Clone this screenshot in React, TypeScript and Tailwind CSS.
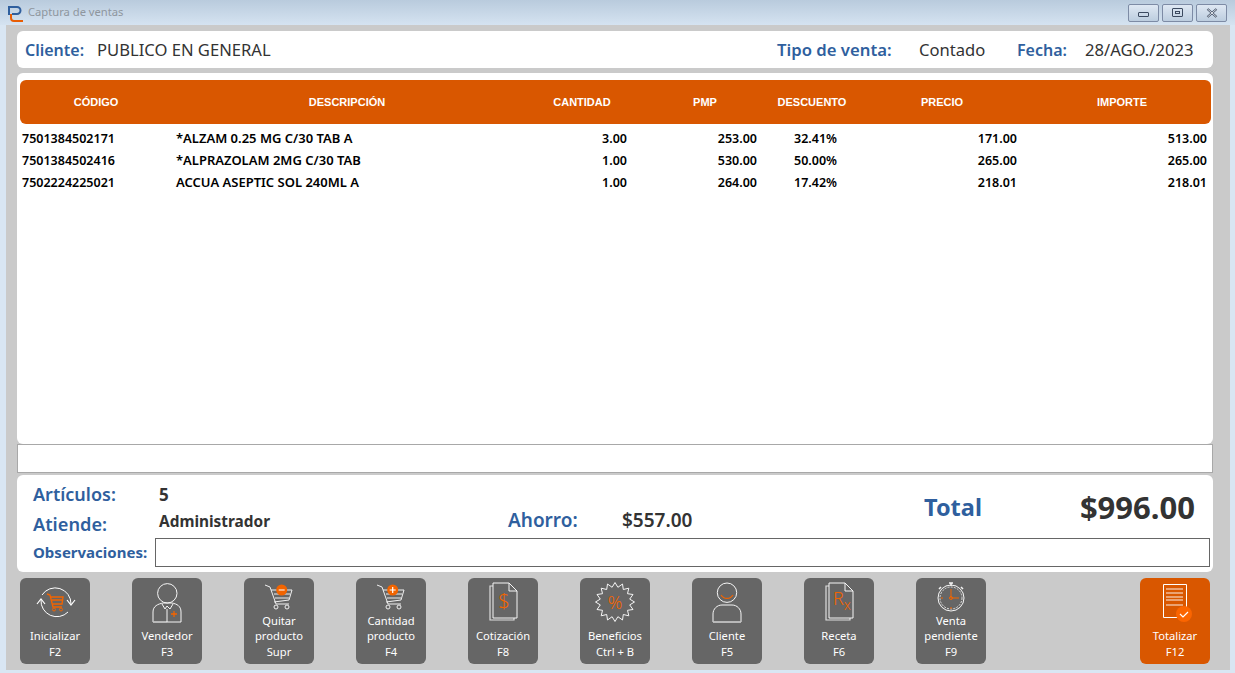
import React from 'react';

const FONT = "font-['Noto_Sans','Open_Sans',sans-serif]";
const ORANGE = '#f26400';

const rows = [
  { code: '7501384502171', name: '*ALZAM 0.25 MG C/30 TAB A', qty: '3.00', pmp: '253.00', disc: '32.41%', price: '171.00', total: '513.00' },
  { code: '7501384502416', name: '*ALPRAZOLAM 2MG C/30 TAB', qty: '1.00', pmp: '530.00', disc: '50.00%', price: '265.00', total: '265.00' },
  { code: '7502224225021', name: 'ACCUA ASEPTIC SOL 240ML A', qty: '1.00', pmp: '264.00', disc: '17.42%', price: '218.01', total: '218.01' },
];

const COLS = 'grid grid-cols-[152px_350px_120px_126px_88px_172px_1fr]';

const Cart = ({ x, sign }: { x: number; sign: 'plus' | 'minus' }) => (
  <>
    <path d="M21 7l5 2 6 17h13M27 12h21l-3 10-15 2" fill="none" stroke="#f0f0f0" strokeWidth="1" />
    <path d="M30 16h16M31 20h14" stroke="#f0f0f0" strokeWidth="1" />
    <circle cx="32" cy="29" r="2" fill="none" stroke="#f0f0f0" />
    <circle cx="43" cy="29" r="2" fill="none" stroke="#f0f0f0" />
    <circle cx={x} cy="12" r="5.5" fill={ORANGE} />
    <path d={`M${x - 3} 12h6`} stroke="#fff" strokeWidth="1.2" />
    {sign === 'plus' && <path d={`M${x} 9v6`} stroke="#fff" strokeWidth="1.2" />}
  </>
);

const Sheets = ({ children }: { children: React.ReactNode }) => (
  <>
    <path d="M25 8h-3v34h24v-2" fill="none" stroke="#ddd" strokeWidth="1.2" />
    <path d="M25 5h16l8 8v27H25z" fill="#666" stroke="#f5f5f5" strokeWidth="1" />
    <path d="M41 5v8h8" fill="none" stroke="#f5f5f5" strokeWidth="1" />
    {children}
  </>
);

const starPoints = () => {
  const pts: string[] = [];
  for (let i = 0; i < 32; i++) {
    const r = i % 2 === 0 ? 19.5 : 15;
    const a = (i / 32) * Math.PI * 2;
    pts.push(`${(35 + r * Math.sin(a)).toFixed(1)},${(24 - r * Math.cos(a)).toFixed(1)}`);
  }
  return pts.join(' ');
};

const icons: Record<string, React.ReactNode> = {
  init: (
    <>
      <path d="M22 17A15.8 15.8 0 0 1 51 26M48 34A15.8 15.8 0 0 1 21 22" fill="none" stroke="#fff" strokeWidth="1" />
      <path d="M17 26l4-5 4 5M47 22l4 5 4-5" fill="none" stroke="#fff" strokeWidth="1.2" />
      <path d="M27 16l3 1 3 12h9M31 19h12l-1 7H33M32 22h11" fill="none" stroke={ORANGE} strokeWidth="1.4" />
      <circle cx="34" cy="31.5" r="1.5" fill="none" stroke={ORANGE} />
      <circle cx="41" cy="31.5" r="1.5" fill="none" stroke={ORANGE} />
    </>
  ),
  seller: (
    <>
      <circle cx="35.3" cy="15.3" r="9.7" fill="none" stroke="#f5f5f5" strokeWidth="1" />
      <path d="M21 44V34c0-6 5-8 10-9h9c5 1 9 3 9 9v10z" fill="none" stroke="#f5f5f5" strokeWidth="1" />
      <path d="M21 44h14" stroke="#bbb" strokeWidth="1.5" />
      <path d="M30 26l3 5 2-3 3 3 3-5M35 31v13" fill="none" stroke="#f5f5f5" strokeWidth="1" />
      <path d="M39 36h6M42 33v6" stroke={ORANGE} strokeWidth="1.3" />
    </>
  ),
  remove: <Cart x={37.7} sign="minus" />,
  add: <Cart x={36.7} sign="plus" />,
  quote: (
    <Sheets>
      <text x="36" y="30" textAnchor="middle" fontSize="20" fill={ORANGE} fontFamily="Noto Sans" fontWeight="300">$</text>
    </Sheets>
  ),
  benefits: (
    <>
      <polygon points={starPoints()} fill="none" stroke="#f5f5f5" strokeWidth="1" />
      <text x="35" y="31" textAnchor="middle" fontSize="18" fill={ORANGE} fontFamily="Noto Sans" fontWeight="300">%</text>
    </>
  ),
  client: (
    <>
      <circle cx="35" cy="14.7" r="9.7" fill="none" stroke="#f5f5f5" strokeWidth="1" />
      <path d="M29 17a7 7 0 0 0 12 0" fill="none" stroke={ORANGE} strokeWidth="1.2" />
      <path d="M21 44V36c0-5 4-9 9-9h10c5 0 9 4 9 9v8z" fill="none" stroke="#f5f5f5" strokeWidth="1" />
      <path d="M21 44h28" stroke="#bbb" strokeWidth="1.5" />
    </>
  ),
  recipe: (
    <Sheets>
      <text x="29" y="27" fontSize="18" fill={ORANGE} fontFamily="Noto Sans" fontWeight="300">
        R<tspan dy="5" fontSize="14">x</tspan>
      </text>
    </Sheets>
  ),
  pending: (
    <>
      <path d="M33 5h4M35 5v3M25 9l-2 2M45 9l2 2" stroke="#f5f5f5" strokeWidth="1.5" />
      <circle cx="35" cy="20" r="13" fill="none" stroke="#f5f5f5" strokeWidth="1" />
      <circle cx="35" cy="20" r="11" fill="none" stroke="#ddd" strokeWidth="1" strokeDasharray="2 1.2" />
      <path d="M35 20V11M35 20h8" stroke={ORANGE} strokeWidth="1" />
      <circle cx="35" cy="20" r="1.5" fill="none" stroke={ORANGE} />
      <path d="M25 20h2M35 29v2" stroke={ORANGE} strokeWidth="1" />
    </>
  ),
  total: (
    <>
      <path d="M23.5 6.5h23v33h-23z" fill="none" stroke="#fff" strokeWidth="1" />
      <path d="M26 11h17M26 15h17M26 19h17M26 22h17M26 27h17" stroke="#fff" strokeWidth="0.9" />
      <circle cx="44" cy="36" r="8" fill="#fb6500" />
      <path d="M40 36l3 3 5-5" fill="none" stroke="#fff" strokeWidth="1.2" />
    </>
  ),
};

const buttons = [
  { icon: 'init', lines: ['Inicializar', 'F2'] },
  { icon: 'seller', lines: ['Vendedor', 'F3'] },
  { icon: 'remove', lines: ['Quitar', 'producto', 'Supr'] },
  { icon: 'add', lines: ['Cantidad', 'producto', 'F4'] },
  { icon: 'quote', lines: ['Cotización', 'F8'] },
  { icon: 'benefits', lines: ['Beneficios', 'Ctrl + B'] },
  { icon: 'client', lines: ['Cliente', 'F5'] },
  { icon: 'recipe', lines: ['Receta', 'F6'] },
  { icon: 'pending', lines: ['Venta', 'pendiente', 'F9'] },
];

const ActionButton = ({ icon, lines, primary }: { icon: string; lines: string[]; primary?: boolean }) => (
  <div className={`flex h-[86px] w-[70px] flex-col items-center overflow-hidden rounded-[6px] pb-[5px] text-[11.2px] leading-[15.5px] text-white ${primary ? 'bg-[#d95700]' : 'bg-[#666666]'}`}>
    <svg width="70" height={lines.length > 2 ? 34 : 46} viewBox={`0 0 70 ${lines.length > 2 ? 34 : 46}`} className="shrink-0">
      {icons[icon]}
    </svg>
    <div className="mt-auto text-center">
      {lines.map((l) => (
        <div key={l}>{l}</div>
      ))}
    </div>
  </div>
);

const WinButton = ({ children }: { children: React.ReactNode }) => (
  <div className="flex h-[18px] w-[31px] items-center justify-center rounded-[2px] border border-[#7d8ba5] bg-gradient-to-b from-[#dfe8f3] to-[#bccddf]">
    {children}
  </div>
);

export default function App() {
  return (
    <div className={`flex h-[673px] w-[1235px] flex-col overflow-hidden bg-[#d9e6f3] ${FONT}`}>
      {/* title bar */}
      <div className="flex h-[25px] shrink-0 items-center bg-gradient-to-b from-[#b9cbdd] to-[#d5e3f1] pl-[7px] pr-[8px]">
        <svg width="18" height="20" viewBox="0 0 18 20" className="mr-[3px]">
          <path d="M2 12V4h8a3.5 3.5 0 0 1 0 7H5" fill="none" stroke="#2f5f9e" strokeWidth="2" />
          <path d="M16 18H7a3 3 0 0 1-3-3v-4" fill="none" stroke="#e85d04" strokeWidth="2" />
        </svg>
        <span className="text-[11.2px] text-[#8e969e]">Captura de ventas</span>
        <div className="ml-auto flex gap-[3px]">
          <WinButton><div className="mt-[3px] h-[5px] w-[11px] rounded-[1px] border border-[#3c4a60]" /></WinButton>
          <WinButton><div className="flex h-[9px] w-[11px] items-center justify-center rounded-[1px] border border-[#3c4a60]"><div className="h-[3px] w-[5px] border border-[#3c4a60]" /></div></WinButton>
          <WinButton>
            <svg width="12" height="10" viewBox="0 0 12 10"><path d="M1.5 1l9 8M10.5 1l-9 8" stroke="#3c4a60" strokeWidth="2.2" /><path d="M1.5 1l9 8M10.5 1l-9 8" stroke="#f2f5f9" strokeWidth="0.9" /></svg>
          </WinButton>
        </div>
      </div>

      {/* body */}
      <div className="ml-[6px] mr-[5px] flex h-[645px] shrink-0 flex-col bg-[#cacaca] px-[11px] pt-[6px]">
        {/* client */}
        <div className="flex h-[37px] w-[1196px] shrink-0 items-center rounded-[6px] bg-white pl-[8px] pt-[1px] text-[16.6px] text-[#333]">
          <span className="w-[72px] text-[16px] font-semibold text-[#2f5f9e]">Cliente:</span>
          <span className="w-[680px]">PUBLICO EN GENERAL</span>
          <span className="w-[142px] text-[16.7px] font-semibold text-[#2f5f9e]">Tipo de venta:</span>
          <span className="w-[98px]">Contado</span>
          <span className="w-[68px] text-[16px] font-semibold text-[#2f5f9e]">Fecha:</span>
          <span>28/AGO./2023</span>
        </div>

        {/* table */}
        <div className="mt-[5px] h-[371px] w-[1196px] shrink-0 rounded-[6px] bg-white pl-[3px] pr-[2px] pt-[7px]">
          <div className={`${COLS} h-[44px] items-center rounded-[6px] bg-[#d95700] text-center font-['Liberation_Sans',sans-serif] text-[11px] font-bold text-white`}>
            <span>CÓDIGO</span>
            <span>DESCRIPCIÓN</span>
            <span>CANTIDAD</span>
            <span>PMP</span>
            <span>DESCUENTO</span>
            <span>PRECIO</span>
            <span className="pl-[5px]">IMPORTE</span>
          </div>
          <div className="pt-[3px] text-[12.5px] font-semibold leading-[22px] text-black">
            {rows.map((r) => (
              <div key={r.code} className={`${COLS} h-[22px] items-baseline`}>
                <span className="pl-[2px]">{r.code}</span>
                <span className="pl-[4px] text-[13px]">{r.name}</span>
                <span className="pr-[15px] text-right">{r.qty}</span>
                <span className="pr-[11px] text-right">{r.pmp}</span>
                <span className="pr-[19px] text-right">{r.disc}</span>
                <span className="pr-[11px] text-right">{r.price}</span>
                <span className="pr-[4px] text-right">{r.total}</span>
              </div>
            ))}
          </div>
        </div>

        {/* empty line */}
        <div className="h-[29px] w-[1196px] shrink-0 border border-[#a8a8a8] bg-white" />

        {/* summary */}
        <div className="mt-[2px] h-[97px] w-[1196px] shrink-0 rounded-[6px] bg-white pl-[16px] pt-[6px]">
          <div className="grid h-[54px] grid-cols-[126px_349px_114px_302px_100px_171px] grid-rows-[27px_27px] items-center">
            <span className="text-[18px] font-semibold text-[#2f5f9e]">Artículos:</span>
            <span className="col-span-3 text-[17px] font-bold text-[#333]">5</span>
            <span className="row-span-2 -mt-[1px] text-[23.5px] font-bold text-[#2f5f9e]">Total</span>
            <span className="row-span-2 -mt-[1px] text-right text-[31px] font-bold text-[#333]">$996.00</span>
            <span className="mt-[7px] text-[18.2px] font-semibold text-[#2f5f9e]">Atiende:</span>
            <span className="mt-0 text-[15.4px] font-bold text-[#333]">Administrador</span>
            <span className="-mt-[2px] text-[19px] font-semibold text-[#2f5f9e]">Ahorro:</span>
            <span className="-mt-[2px] text-[19px] font-semibold text-[#333]">$557.00</span>
          </div>
          <div className="mt-[3px] flex items-center">
            <span className="w-[122px] text-[15px] font-bold text-[#2f5f9e]">Observaciones:</span>
            <div className="h-[29px] w-[1055px] border border-[#666] bg-white" />
          </div>
        </div>

        {/* actions */}
        <div className="mt-[6px] flex w-[1193px] gap-[42px] pl-[3px]">
          {buttons.map((b) => (
            <ActionButton key={b.icon} icon={b.icon} lines={b.lines} />
          ))}
          <div className="ml-auto">
            <ActionButton icon="total" lines={['Totalizar', 'F12']} primary />
          </div>
        </div>
      </div>
    </div>
  );
}
